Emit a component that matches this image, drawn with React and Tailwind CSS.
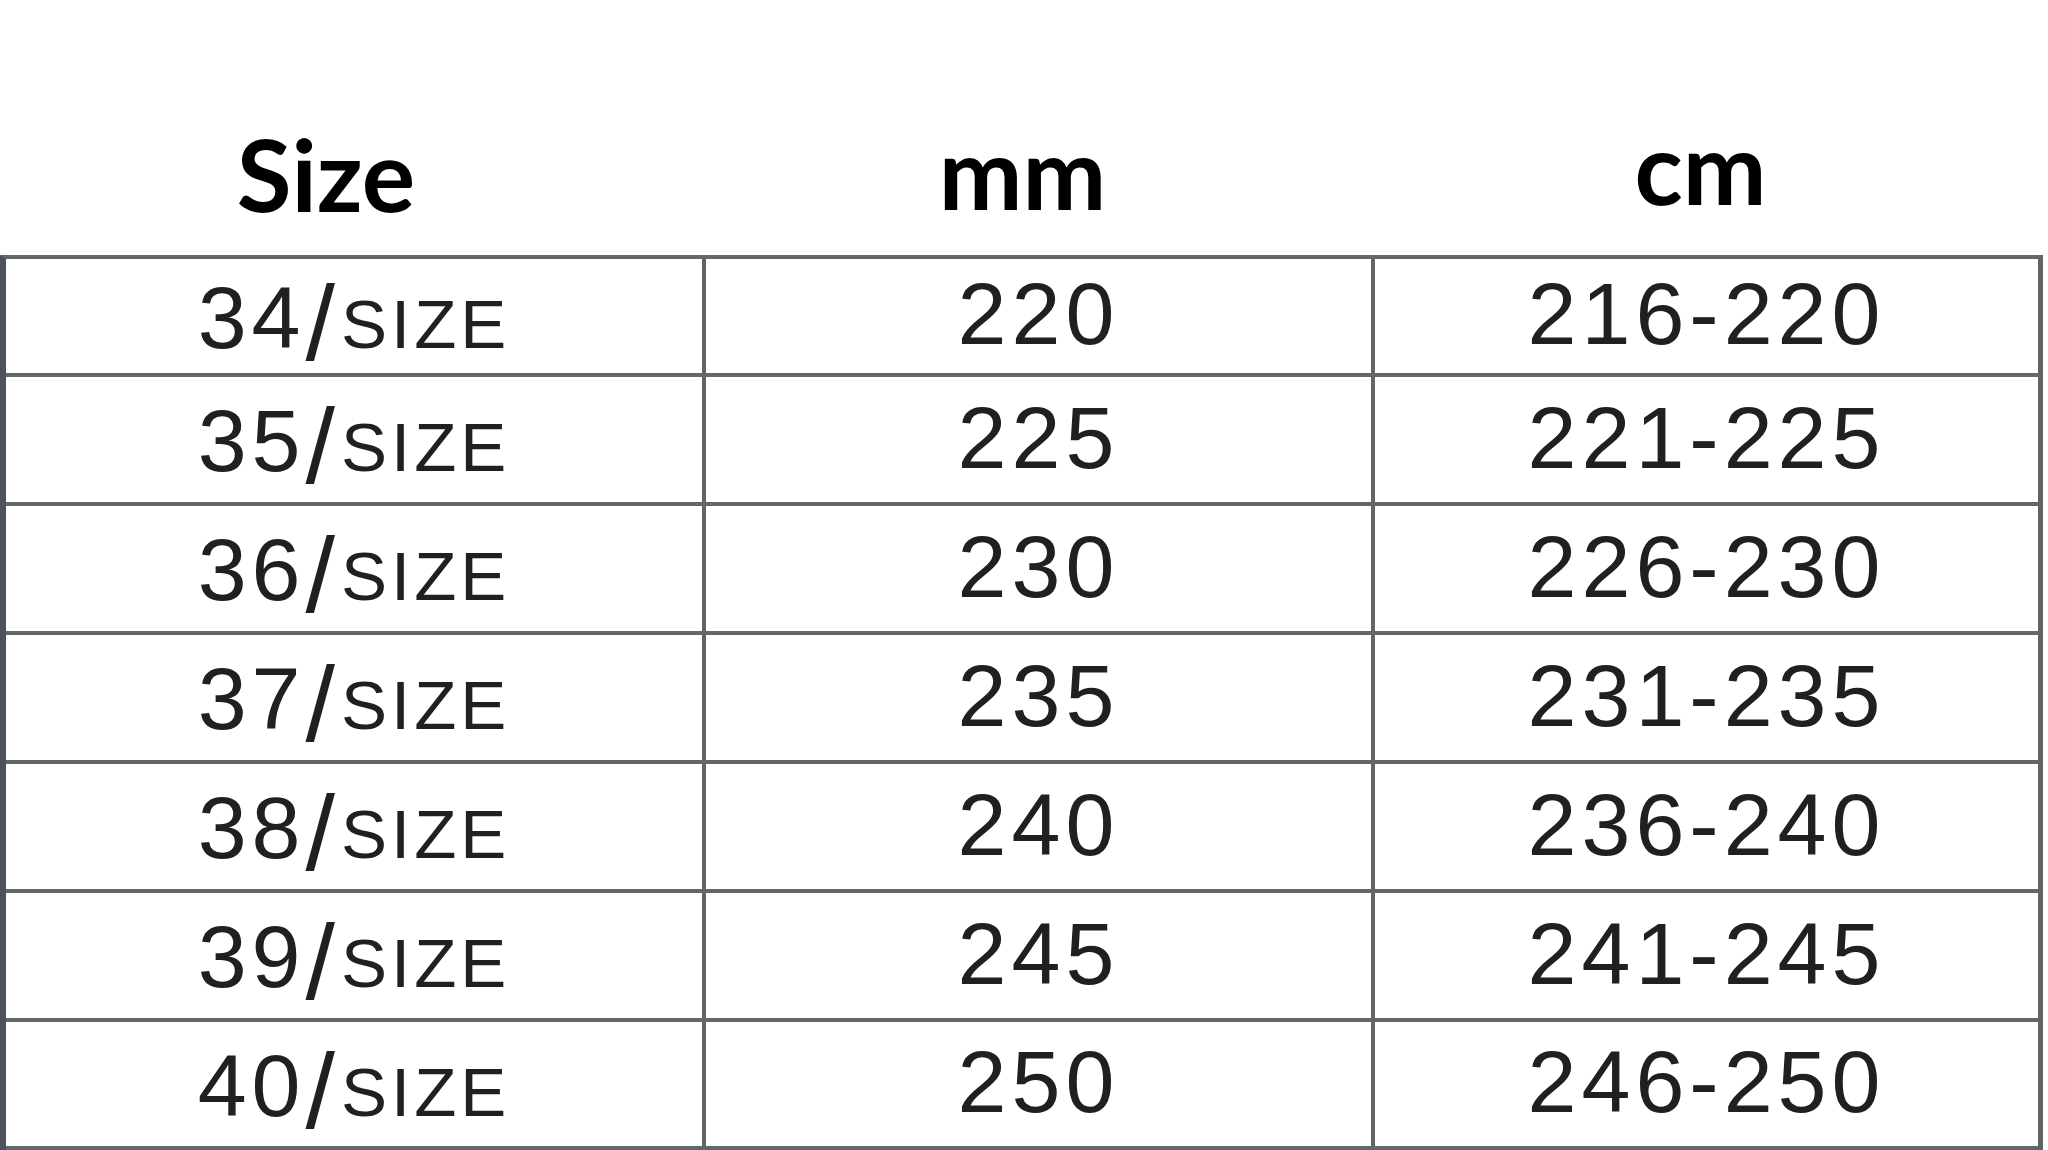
import React from "react";

const rows = [
  { size: "34", mm: "220", cm: "216-220" },
  { size: "35", mm: "225", cm: "221-225" },
  { size: "36", mm: "230", cm: "226-230" },
  { size: "37", mm: "235", cm: "231-235" },
  { size: "38", mm: "240", cm: "236-240" },
  { size: "39", mm: "245", cm: "241-245" },
  { size: "40", mm: "250", cm: "246-250" },
];

const cellText =
  "font-['Liberation_Sans',Arial,sans-serif] text-[88px] leading-none tracking-[5px] text-[#202020]";

function SizeLabel({ n }) {
  return (
    <span className={cellText}>
      {n}
      <span className="inline-block leading-[88px] translate-y-[12px] text-[106px] font-light tracking-[6px]">/</span>
      <span className="text-[69px] tracking-[4px]">SIZE</span>
    </span>
  );
}

export default function App() {
  return (
    <div className="w-[2048px] h-[1150px] bg-white overflow-hidden">
      {/* header */}
      <div className="flex h-[255px] font-['Lato',sans-serif] font-bold text-[100px] leading-none text-black">
        <div className="w-[706px] flex items-end justify-center pr-[54px] pb-[32px]">Size</div>
        <div className="w-[669px] flex items-end justify-center pr-[36px] pb-[34px]">mm</div>
        <div className="flex-1 flex items-end justify-center pr-[22px] pb-[39px]">cm</div>
      </div>

      {/* table */}
      <div className="w-[2043px] border-t-4 border-l-[6px] border-r-[5px] border-t-[#65666a] border-l-[#4d5160] border-r-[#626366]">
        {rows.map((r, i) => (
          <div
            key={r.size}
            className={`flex border-b-4 border-[#65666a] ${
              i === 0 ? "h-[118px]" : i === rows.length - 1 ? "h-[128px]" : "h-[129px]"
            }`}
          >
            <div className="w-[700px] border-r-4 border-[#646569] flex items-center justify-center pb-1">
              <SizeLabel n={r.size} />
            </div>
            <div className="w-[669px] border-r-4 border-[#646569] flex items-center justify-center pb-1">
              <span className={cellText}>{r.mm}</span>
            </div>
            <div className="flex-1 flex items-center justify-center pb-1">
              <span className={cellText}>{r.cm}</span>
            </div>
          </div>
        ))}
      </div>
    </div>
  );
}
